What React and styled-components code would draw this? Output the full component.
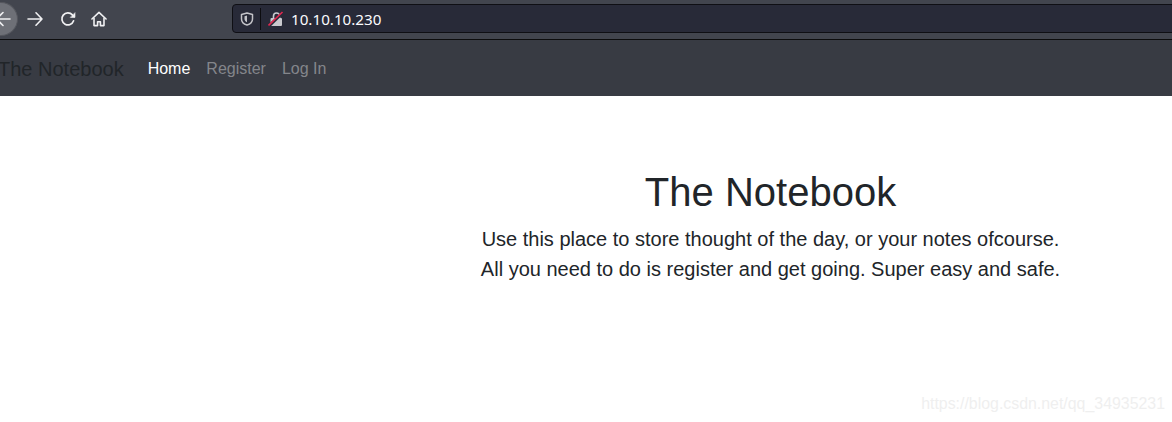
import React from "react"
import styled, { createGlobalStyle } from "styled-components"

const Global = createGlobalStyle`
html, body {
  margin: 0;
  padding: 0;
  background: #fff;
}
body {
  font-family: "Liberation Sans", Arial, sans-serif;
}
`

const Page = styled.div`
position: relative;
width: 1172px;
height: 422px;
overflow: hidden;
`

const Toolbar = styled.div`
display: flex;
align-items: center;
height: 40px;
box-sizing: border-box;
padding-bottom: 2px;
background: #42454e;
border-bottom: 1px solid #0c0c0d;
`

const BackButton = styled.div`
flex: none;
display: flex;
align-items: center;
width: 18px;
height: 34px;
margin-right: 9px;
background: #6e7077;
border: 1px solid #55575e;
border-left: 0;
box-sizing: border-box;
border-radius: 0 17px 17px 0;
overflow: hidden;
`

const IconButton = styled.div`
flex: none;
display: flex;
align-items: center;
justify-content: center;
width: 16px;
height: 16px;
margin-right: ${p => p.$gap}px;
color: #f0f0f2;
`

const UrlBar = styled.div`
flex: 1;
display: flex;
align-items: center;
height: 29px;
margin-left: 125px;
margin-right: -8px;
padding-left: 7px;
background: #282a38;
border: 1px solid #0f0f14;
border-radius: 4px;
box-sizing: border-box;
`

const Divider = styled.span`
width: 1px;
height: 22px;
margin: 0 7px 0 6px;
background: #0c0c0f;
`

const Address = styled.span`
margin-left: 7px;
font-family: "Noto Sans", "Open Sans", sans-serif;
font-size: 15.2px;
color: #fbfbfe;
`

const Nav = styled.nav`
display: flex;
align-items: center;
height: 56px;
box-sizing: border-box;
padding-top: 2px;
background: #383b43;
`

const Brand = styled.a`
margin-left: -2px;
margin-right: 24px;
font-size: 20px;
color: #212529;
`

const NavLink = styled.a`
margin-right: 16px;
font-size: 16px;
color: ${p => (p.$active ? "#ffffff" : "#84868b")};
`

const Main = styled.main`
padding: 72px 0 0 369px;
text-align: center;
color: #212529;
`

const Title = styled.h1`
margin: 0 0 8px;
font-size: 40px;
font-weight: 500;
line-height: 48px;
`

const Lead = styled.p`
margin: 0;
font-size: 20px;
line-height: 30px;
`

const Watermark = styled.span`
position: absolute;
right: 7px;
bottom: 9px;
font-size: 15.9px;
color: #efefef;
`

const Back = () => (
  <svg width="12" height="16" viewBox="0 0 12 16" fill="none" stroke="#f0f0f2" strokeWidth="1.6" strokeLinecap="round">
    <path d="M3 1.500-3.500 8 3 14.500M-3.500 8H10" />
  </svg>
)

const Forward = () => (
  <svg width="16" height="16" viewBox="0 0 16 16" fill="none" stroke="currentColor" strokeWidth="1.6" strokeLinecap="round" strokeLinejoin="round">
    <path d="M1 8h14M9 1.800 15 8l-6 6.200" />
  </svg>
)

const Reload = () => (
  <svg width="16" height="16" viewBox="0 0 16 16" fill="none" stroke="currentColor" strokeWidth="1.7" strokeLinecap="round" strokeLinejoin="round">
    <path d="M13.600 9.800A6 6 0 1 1 12.400 3.900L14 5.500" />
    <path d="M15 2v4.400h-4.400z" fill="currentColor" strokeWidth="0.6" />
  </svg>
)

const Home = () => (
  <svg width="16" height="16" viewBox="0 0 17 16" fill="none" stroke="currentColor" strokeWidth="1.7" strokeLinejoin="round">
    <path d="M1 8 8.500 1 16 8" strokeLinecap="round" />
    <path d="M3.200 6.800V15h3.800v-4h3v4h3.800V6.800" />
  </svg>
)

const Shield = () => (
  <svg width="14" height="14" viewBox="0 0 14 14" fill="none">
    <path d="M7 1 1.500 2.400V7c0 3 2.600 5.200 5.500 6 2.900-.8 5.500-3 5.500-6V2.400z" stroke="#c3c3c8" strokeWidth="1.500" strokeLinejoin="round" />
    <path d="M7 3.500 4.500 4.200V7c0 1.500 1.200 2.800 2.500 3.300z" fill="#c3c3c8" />
  </svg>
)

const BrokenLock = () => (
  <svg width="16" height="16" viewBox="0 0 16 16" fill="none">
    <path d="M5.500 7V5a3 3 0 0 1 6 0v2" stroke="#c9c9ce" strokeWidth="1.600" />
    <rect x="2.500" y="7" width="11.500" height="8" rx="1" fill="#c9c9ce" />
    <path d="M1 15 15 1.500" stroke="#282a38" strokeWidth="3" />
    <path d="M0.500 14.500 14.500 1" stroke="#e22850" strokeWidth="1.600" />
  </svg>
)

const App = () => (
  <Page>
    <Global />
    <Toolbar>
      <BackButton>
        <Back />
      </BackButton>
      <IconButton $gap={17}>
        <Forward />
      </IconButton>
      <IconButton $gap={15}>
        <Reload />
      </IconButton>
      <IconButton $gap={0}>
        <Home />
      </IconButton>
      <UrlBar>
        <Shield />
        <Divider />
        <BrokenLock />
        <Address>10.10.10.230</Address>
      </UrlBar>
    </Toolbar>
    <Nav>
      <Brand>The Notebook</Brand>
      <NavLink $active>Home</NavLink>
      <NavLink>Register</NavLink>
      <NavLink>Log In</NavLink>
    </Nav>
    <Main>
      <Title>The Notebook</Title>
      <Lead>Use this place to store thought of the day, or your notes ofcourse.</Lead>
      <Lead>All you need to do is register and get going. Super easy and safe.</Lead>
    </Main>
    <Watermark>https://blog.csdn.net/qq_34935231</Watermark>
  </Page>
)

export default App
